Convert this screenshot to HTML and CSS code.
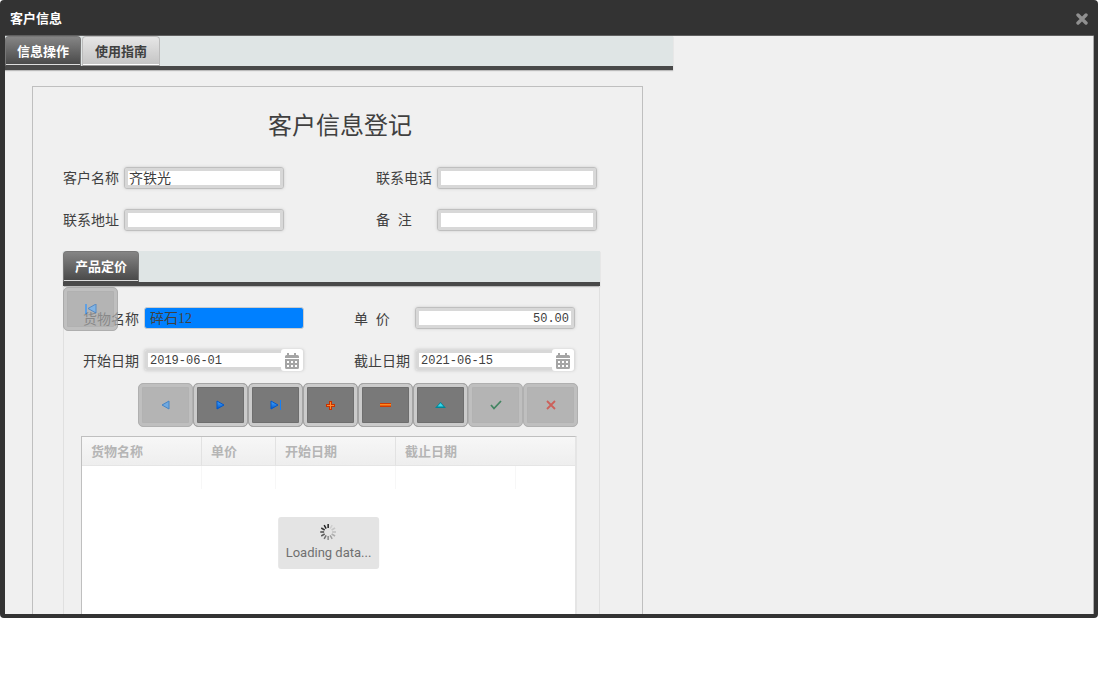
FILE: index.html
```html
<!DOCTYPE html>
<html lang="zh-CN">
<head>
<meta charset="utf-8">
<title>客户信息</title>
<link rel="stylesheet" href="styles.css">
</head>
<body>
<svg class="defs" aria-hidden="true">
  <defs>
    <linearGradient id="blue" x1="0" y1="0" x2="0" y2="1"><stop offset="0" stop-color="#4aa8ff"/><stop offset="1" stop-color="#0056c8"/></linearGradient>
    <symbol id="calendar" viewBox="0 0 16 17">
      <path fill="#a5a5a5" d="M3 1h2v2h5V1h2v2h1.500q1.500 0 1.500 1.500V6H1V4.500Q1 3 2.500 3H3zM1 7h14v8.500q0 1.500-1.500 1.500h-11Q1 17 1 15.500z"/>
      <path fill="#fff" d="M3 9h2v2H3zM7 9h2v2H7zM11 9h2v2h-2zM3 13h2v2H3zM7 13h2v2H7zM11 13h2v2h-2z"/>
    </symbol>
  </defs>
</svg>
<main class="window">
  <header class="titlebar">
    <h1 class="window-title">客户信息</h1>
    <button class="close" type="button" aria-label="关闭"><svg width="12" height="12" viewBox="0 0 12 12"><path d="M2 2l8 8M10 2l-8 8" fill="none" stroke="#909090" stroke-width="3.400" stroke-linecap="round"/></svg></button>
  </header>
  <div class="window-body">
    <div class="page">
      <nav class="tabs">
        <button class="tab active" type="button">信息操作</button>
        <button class="tab" type="button">使用指南</button>
      </nav>
      <form class="card">
        <h2 class="title">客户信息登记</h2>
        <div class="rows customer">
          <div class="row">
            <div class="field"><label for="name">客户名称</label><input id="name" class="box" type="text" value="齐铁光"></div>
            <div class="field"><label for="phone">联系电话</label><input id="phone" class="box" type="text"></div>
          </div>
          <div class="row">
            <div class="field"><label for="address">联系地址</label><input id="address" class="box" type="text"></div>
            <div class="field"><label for="note">备&nbsp;&nbsp;注</label><input id="note" class="box" type="text"></div>
          </div>
        </div>
        <section class="pricing">
          <div class="tabs"><button class="tab active" type="button">产品定价</button></div>
          <div class="panel">
            <button class="tool off first" type="button" aria-label="第一条"><svg width="12" height="10" viewBox="0 0 12 10"><path d="M0 0h2v10H0z" fill="#2f86e0"/><path d="M11 0v9L3 4.500z" fill="#5b9fe0" stroke="#2468b4"/></svg></button>
            <div class="rows product">
              <div class="row">
                <div class="field"><label for="goods">货物名称</label><input id="goods" class="box selected" type="text" value="碎石12"></div>
                <div class="field"><label for="price">单&nbsp;&nbsp;价</label><input id="price" class="box mono number" type="text" value="50.00"></div>
              </div>
              <div class="row">
                <div class="field"><label for="start">开始日期</label><div class="date"><input id="start" class="mono" type="text" value="2019-06-01"><button class="pick" type="button" aria-label="选择开始日期"><svg width="16" height="17"><use href="#calendar"/></svg></button></div></div>
                <div class="field"><label for="end">截止日期</label><div class="date"><input id="end" class="mono" type="text" value="2021-06-15"><button class="pick" type="button" aria-label="选择截止日期"><svg width="16" height="17"><use href="#calendar"/></svg></button></div></div>
              </div>
            </div>
            <div class="toolbar">
              <button class="tool off" type="button" aria-label="上一条"><svg width="9" height="10" viewBox="0 0 9 10"><path d="M8 1v8L1 5z" fill="#70a9e0" stroke="#4684c4"/></svg></button>
              <button class="tool" type="button" aria-label="下一条"><svg width="9" height="10" viewBox="0 0 9 10"><path d="M1 1v8l7-4z" fill="url(#blue)" stroke="#0058cc"/></svg></button>
              <button class="tool" type="button" aria-label="最后一条"><svg width="11" height="10" viewBox="0 0 11 10"><path d="M1 1v8l7-4z" fill="url(#blue)" stroke="#0058cc"/><path d="M10 0h1v10h-1z" fill="#1680f5"/></svg></button>
              <button class="tool" type="button" aria-label="新增"><svg width="9" height="9" viewBox="0 0 9 9"><path d="M3 0h3v3h3v3H6v3H3V6H0V3h3z" fill="#c83200"/><path d="M4 1h1v3h3v1H5v3H4V5H1V4h3z" fill="#ff8a30"/></svg></button>
              <button class="tool" type="button" aria-label="删除"><svg width="11" height="4" viewBox="0 0 11 4"><path d="M0 0h11v4H0z" fill="#d03a00"/><path d="M0 1h11v1.500H0z" fill="#ff8a20"/></svg></button>
              <button class="tool" type="button" aria-label="编辑"><svg width="11" height="6" viewBox="0 0 11 6"><path d="M0 6L5.500 0 11 6z" fill="#008799"/><path d="M2.500 4.500L5.500 1l3 3.500z" fill="#38d8ec"/></svg></button>
              <button class="tool off" type="button" aria-label="保存"><svg width="12" height="10" viewBox="0 0 12 10"><path d="M1 5l3 3.500L11 1" fill="none" stroke="#438562" stroke-width="1.800"/></svg></button>
              <button class="tool off" type="button" aria-label="取消"><svg width="10" height="10" viewBox="0 0 10 10"><path d="M1 1l8 8M9 1L1 9" fill="none" stroke="#cc605a" stroke-width="1.800"/></svg></button>
            </div>
            <div class="grid">
              <table class="table">
                <colgroup><col class="wide"><col class="narrow"><col class="wide"><col class="wide"><col></colgroup>
                <thead><tr><th>货物名称</th><th>单价</th><th>开始日期</th><th colspan="2">截止日期</th></tr></thead>
                <tbody><tr><td></td><td></td><td></td><td></td><td></td></tr></tbody>
              </table>
              <div class="loading" role="status">
                <svg width="16" height="16" viewBox="-8 -8 16 16" fill="none" stroke="#222" stroke-width="1.500">
                  <path d="M0-4v-4"/><path d="M0-4v-4" transform="rotate(30)" opacity=".1"/><path d="M0-4v-4" transform="rotate(60)" opacity=".15"/><path d="M0-4v-4" transform="rotate(90)" opacity=".2"/><path d="M0-4v-4" transform="rotate(120)" opacity=".28"/><path d="M0-4v-4" transform="rotate(150)" opacity=".36"/><path d="M0-4v-4" transform="rotate(180)" opacity=".46"/><path d="M0-4v-4" transform="rotate(210)" opacity=".6"/><path d="M0-4v-4" transform="rotate(240)" opacity=".7"/><path d="M0-4v-4" transform="rotate(270)" opacity=".8"/><path d="M0-4v-4" transform="rotate(300)" opacity=".9"/><path d="M0-4v-4" transform="rotate(330)"/>
                </svg>
                <span>Loading data...</span>
              </div>
            </div>
          </div>
        </section>
      </form>
    </div>
  </div>
</main>
</body>
</html>
```
FILE: styles.css
```css
* { box-sizing: border-box; }

body {
  margin: 0;
  background: #fff;
  color: #404040;
  font: 14px/22px "Liberation Sans", "Noto Sans CJK SC", sans-serif;
}

button, input { font: inherit; color: inherit; margin: 0; padding: 0; border: 0; }
button, .date { display: flex; align-items: center; }
button { justify-content: center; background: none; }
svg { display: block; flex: none; }
.defs { position: absolute; width: 0; height: 0; }

.window {
  display: flex;
  flex-direction: column;
  height: 90vh;
  margin-right: 1px;
  padding: 0 4px 4px 5px;
  background: #333;
  border-radius: 4px;
}

.titlebar {
  display: flex;
  flex: none;
  align-items: center;
  justify-content: space-between;
  height: 36px;
  padding: 3px 6px 0 5px;
  border-bottom: 1px solid #606060;
}

.window-title { margin: 0; color: #fff; font-size: 13px; line-height: 20px; }

.window-body {
  flex: 1;
  min-height: 0;
  overflow: hidden;
  background: #f0f0f0;
  border-right: 1px solid #aaa;
}

.page { max-width: 668px; }

.tabs {
  display: flex;
  gap: 1px;
  height: 34px;
  background: #dfe5e5;
  border-bottom: 4px solid #494949;
  box-shadow: 0 1px 1px #bbb;
}

.tab {
  height: 30px;
  padding: 1px 11px 0;
  border: 1px solid #bbb;
  border-bottom-color: #999;
  border-radius: 4px 4px 0 0;
  background: linear-gradient(#e6e6e6, #c4c4c4);
  box-shadow: inset 0 -1px #fff;
  font-size: 13px;
  font-weight: bold;
}

.tab + .tab { padding: 1px 12px 0; }

.tab.active {
  border-color: #777;
  border-bottom-color: #494949;
  background: linear-gradient(#858585, #484848);
  box-shadow: inset 0 -1px #ddd;
  color: #fff;
}

.card {
  margin: 16px 30px 0 27px;
  padding: 23px 42px 40px 29px;
  border: 1px solid #bfbfbf;
}

.title {
  margin: 0 0 25px;
  padding-left: 18px;
  font-size: 24px;
  font-weight: normal;
  line-height: 32px;
  text-align: center;
}

.rows { display: flex; flex-direction: column; gap: 20px; }
.row { display: flex; justify-content: space-between; }
.field { display: flex; }
.field label { width: 62px; padding-left: 1px; white-space: nowrap; }
.customer { margin-right: 3px; }
.product { margin: 0 2px 12px 1px; }

.box, .date {
  width: 160px;
  height: 22px;
  border: 1px solid #bfbfbf;
  border-radius: 3px;
  background: #fff;
  box-shadow: inset 0 0 0 3px #d8d8d8, 0 0 3px #ccc;
}

.box { padding: 0 4px; }
.mono { padding-top: 2px; font-family: "Liberation Mono", monospace; font-size: 12px; }
.number { padding-right: 5px; text-align: right; }
.product label { line-height: 24px; height: 22px; }

.selected {
  padding: 2px 5px 0;
  border-color: #ccc;
  background: #0080ff;
  box-shadow: none;
  font-family: "Liberation Serif", "Noto Sans CJK SC", serif;
}

.date { border-color: #ddd; }
.date input { flex: 1; min-width: 0; height: 20px; padding-left: 5px; background: none; }
.pick { width: 22px; height: 22px; background: #fff; border-radius: 3px; }

.pricing { margin: 20px 0 0 1px; }
.pricing .tabs { height: 35px; }
.pricing .tab { height: 31px; }

.panel {
  position: relative;
  padding: 21px 22px 20px 17px;
  border: 1px solid #e0e0e0;
  border-top: 0;
}

.toolbar { display: flex; margin: 0 -1px 9px 57px; }

.tool {
  width: 55px;
  height: 44px;
  border: 1px solid #a4a4a4;
  border-radius: 5px;
  background: #797979;
  box-shadow: inset 0 0 0 3px #cbcbcb, inset 0 0 0 4px #6e6e6e;
}

.tool.off {
  border-color: #b0b0b0;
  background: #b4b4b4;
  box-shadow: inset 0 0 0 3px #bfbfbf, inset 0 0 0 4px #b2b2b2;
}

.tool.first {
  position: absolute;
  top: 1px;
  left: -1px;
  opacity: .75;
  border-color: #999;
  background: #a0a0a0;
  box-shadow: inset 0 0 0 3px #afafaf, inset 0 0 0 4px #9d9d9d;
}

.grid {
  position: relative;
  height: 214px;
  border: 1px solid #bfbfbf;
  border-right: 2px solid #e5e5e5;
  background: #fff;
}

.table { width: 100%; table-layout: fixed; border-collapse: separate; border-spacing: 0; }
.wide { width: 120px; }
.narrow { width: 74px; }

.table th {
  height: 29px;
  padding: 2px 9px 0;
  border-right: 1px solid #e2e2e2;
  border-bottom: 1px solid #e5e5e5;
  background: linear-gradient(#f7f7f7, #eee);
  color: #b5b5b5;
  font-size: 13px;
  line-height: 20px;
  text-align: left;
}

.table td { height: 23px; padding: 0; border-right: 1px solid #f7f7f7; }
.table th:last-child, .table td:last-child { border-right: 0; }

.loading {
  position: absolute;
  top: 50%;
  left: 50%;
  display: flex;
  flex-direction: column;
  align-items: center;
  padding: 7px 8px 3px;
  border-radius: 3px;
  background: #e4e4e4;
  color: #707070;
  font-family: Roboto, sans-serif;
  font-size: 13px;
  line-height: 26px;
  white-space: nowrap;
  transform: translate(-50%, -50%);
}
```
